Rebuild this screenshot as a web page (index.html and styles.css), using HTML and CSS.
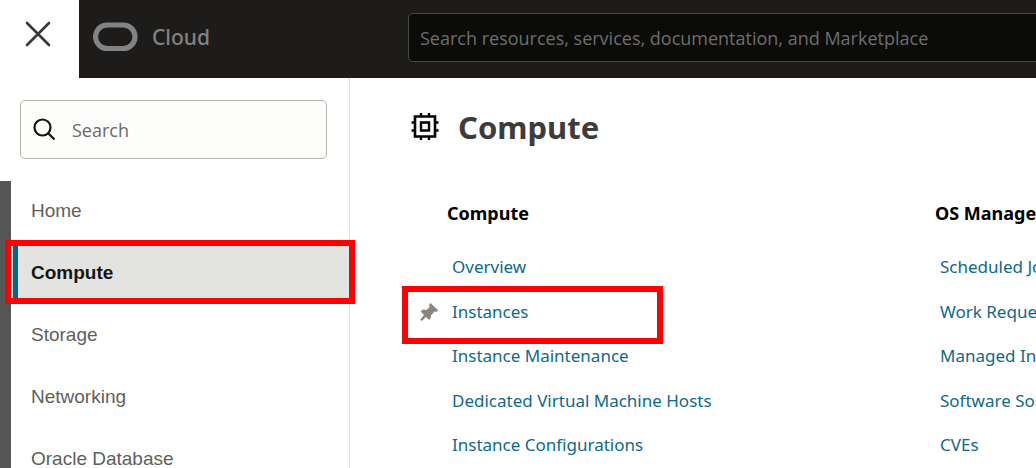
FILE: index.html
```html
<!DOCTYPE html>
<html lang="en">
<head>
<meta charset="utf-8">
<title>Cloud – Compute</title>
<link rel="stylesheet" href="styles.css">
</head>
<body>
<div class="app">
  <header class="topbar">
    <button class="close" type="button" aria-label="Close navigation menu">
      <svg width="26" height="26" viewBox="0 0 26 26" aria-hidden="true"><path d="M2 2 24 24M24 2 2 24" fill="none" stroke="#3a3631" stroke-width="2.6" stroke-linecap="round"/></svg>
    </button>
    <a class="brand" href="#">
      <svg width="46" height="30" viewBox="0 0 46 30" aria-hidden="true"><rect x="2.500" y="3" width="39.5" height="23.500" rx="11.750" fill="none" stroke="#838383" stroke-width="5.200"/></svg>
      <span>Cloud</span>
    </a>
    <input class="global-search" type="search" aria-label="Search resources" placeholder="Search resources, services, documentation, and Marketplace">
  </header>
  <div class="body">
    <aside class="sidebar">
      <div class="filter">
        <svg width="24" height="24" viewBox="0 0 24 24" aria-hidden="true"><g fill="none" stroke="#161513" stroke-width="2.200"><circle cx="9.500" cy="9.500" r="8"/><path d="m15 15 6.500 6.500"/></g></svg>
        <input type="search" aria-label="Search" placeholder="Search">
      </div>
      <nav class="nav" aria-label="Services">
        <a class="nav-item" href="#">Home</a>
        <a class="nav-item current" href="#" aria-current="page">Compute</a>
        <a class="nav-item" href="#">Storage</a>
        <a class="nav-item" href="#">Networking</a>
        <a class="nav-item" href="#">Oracle Database</a>
      </nav>
    </aside>
    <main class="content">
      <h1 class="title">
        <svg width="28" height="28" viewBox="0 0 28 28" aria-hidden="true"><g fill="none" stroke="#000"><path d="M4 3.500h20v20H4z" stroke-width="2.600"/><path d="M10 9.500h8v8h-8z" stroke-width="2.400"/><path d="M10 0v3M18 0v3M10 24v3M18 24v3M.5 9.500h3M.5 17.500h3M24.500 9.500h3M24.500 17.500h3" stroke-width="2.400"/></g></svg>
        Compute
      </h1>
      <div class="columns">
        <section class="group">
          <h2>Compute</h2>
          <ul>
            <li><a href="#">Overview</a></li>
            <li class="pinned">
              <svg class="pin" width="18" height="18" viewBox="0 0 18 18" aria-hidden="true"><path d="M10.500 0 18 7.200 16.700 8.700 14.600 8.500 11 12.200 10.800 15 9 17 6 14 1.700 18 .2 16.700 4 12 .700 8.500 2.800 6.500 6.500 7 9.700 3.800 9 1.800Z" fill="#8b8580"/></svg>
              <a href="#">Instances</a>
            </li>
            <li><a href="#">Instance Maintenance</a></li>
            <li><a href="#">Dedicated Virtual Machine Hosts</a></li>
            <li><a href="#">Instance Configurations</a></li>
          </ul>
        </section>
        <section class="group">
          <h2>OS Management</h2>
          <ul>
            <li><a href="#">Scheduled Jobs</a></li>
            <li><a href="#">Work Requests</a></li>
            <li><a href="#">Managed Instances</a></li>
            <li><a href="#">Software Sources</a></li>
            <li><a href="#">CVEs</a></li>
          </ul>
        </section>
      </div>
    </main>
  </div>
</div>
</body>
</html>
```
FILE: styles.css
```css
*,
*::after {
  box-sizing: border-box;
}

body {
  margin: 0;
  background: #fff;
  font-family: "Noto Sans", "Open Sans", sans-serif;
  font-size: 18px;
}

a {
  text-decoration: none;
}

.app {
  display: flex;
  flex-direction: column;
  height: 100vh;
  overflow: hidden;
}

.topbar {
  display: flex;
  align-items: stretch;
  flex: none;
  background: #1d1c1a;
}

.close {
  display: flex;
  flex: none;
  align-items: center;
  justify-content: center;
  width: 79px;
  height: 78px;
  padding: 0 4px 10px 0;
  border: 0;
  background: #fff;
}

.brand {
  display: flex;
  flex: none;
  align-items: center;
  gap: 13px;
  width: 329px;
  padding: 0 0 4px 14px;
  color: #838383;
  font-size: 21px;
  font-weight: 500;
}

.global-search {
  flex: 1 0 800px;
  height: 49px;
  margin: 13px 0 0;
  padding: 0 11px;
  border: 1px solid #474745;
  border-radius: 5px;
  background: #0b0b09;
  color: #fff;
  font: 18px "Open Sans", sans-serif;
}

.global-search::placeholder {
  color: #6f6e6c;
  opacity: 1;
}

.body {
  display: flex;
  flex: 1;
  min-height: 0;
}

.sidebar {
  display: flex;
  flex: none;
  flex-direction: column;
  width: 350px;
  border-right: 1px solid #dfdfdf;
}

.filter {
  display: flex;
  flex: none;
  align-items: center;
  gap: 15px;
  height: 59px;
  margin: 22px 22px 22px 20px;
  padding: 0 12px;
  border: 1px solid #b9b2aa;
  border-radius: 5px;
  background: #fdfdfb;
}

.filter input {
  flex: 1;
  min-width: 0;
  padding: 0;
  border: 0;
  background: none;
  font: 18px "Open Sans", sans-serif;
}

.filter input::placeholder {
  color: #6f6965;
  opacity: 1;
}

.nav {
  flex: 1;
  border-left: 11px solid #565656;
}

.nav-item {
  display: flex;
  align-items: center;
  height: 62px;
  padding: 0 20px;
  color: #5f5f5f;
  font: 19px "Liberation Sans", Arial, sans-serif;
}

.nav-item:first-child {
  height: 60px;
}

.nav-item.current {
  position: relative;
  height: 63px;
  margin-left: 2px;
  padding: 0 13px;
  border-left: 5px solid #00688c;
  background: #e3e3e1;
  color: #161513;
  font-weight: 700;
}

.current::after,
.pinned::after {
  position: absolute;
  border: 6px solid #f00;
  content: "";
}

.current::after {
  inset: -1px -6px 0 -13px;
}

.content {
  flex: none;
  padding: 26px 0 0 61px;
}

.title {
  display: flex;
  align-items: center;
  gap: 19px;
  margin: 0;
  color: #3d3c3a;
  font-size: 31px;
  line-height: 46px;
}

.columns {
  display: grid;
  grid-template-columns: 488px 488px;
  padding: 49px 0 0 36px;
}

.group h2 {
  margin: 0;
  color: #000;
  font-size: 18px;
  line-height: 28px;
}

.group ul {
  display: grid;
  grid-auto-rows: 45px 44px;
  margin: 0;
  padding: 27px 0 0 5px;
  list-style: none;
}

.group a {
  color: #10698a;
  font-size: 17px;
  line-height: 24px;
}

.pinned {
  position: relative;
}

.pin {
  position: absolute;
  top: 4px;
  left: -32px;
}

.pinned::after {
  top: -13px;
  bottom: -1px;
  left: -50px;
  width: 261px;
}
```
